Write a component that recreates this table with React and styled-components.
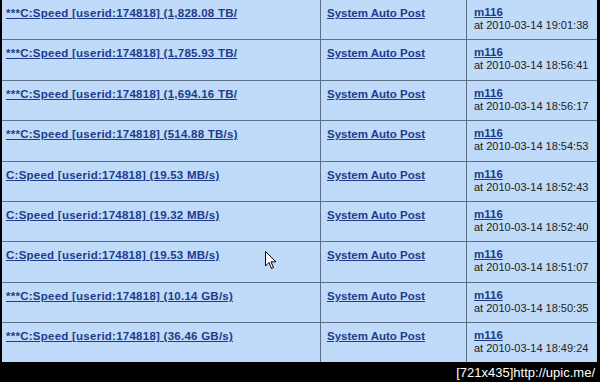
import React from 'react'
import styled, { createGlobalStyle } from 'styled-components'

const Global = createGlobalStyle`
  html, body {
    margin: 0;
    padding: 0;
    background: #000;
  }
  body {
    width: 600px;
    height: 382px;
    overflow: hidden;
  }
`

const Screen = styled.div`
  position: relative;
  width: 600px;
  height: 382px;
  background: #000;
  display: flex;
  flex-direction: column;
`

const Table = styled.div`
  margin-left: 2px;
  width: 595px;
  height: 362px;
  flex: none;
  overflow: hidden;
  background: #c0dbf9;
  display: flex;
  flex-direction: column;
`

const Row = styled.div`
  flex: none;
  height: 40.4px;
  box-sizing: border-box;
  display: grid;
  grid-template-columns: 319px 146px 1fr;
  border-bottom: 1px solid #5d6f87;
`

const Cell = styled.div`
  padding: ${p => p.pad || '6px 4px'};
  border-right: ${p => (p.edge ? '1px solid #5d6f87' : 'none')};
  font-family: "Liberation Sans", Arial, sans-serif;
  font-size: 11px;
  line-height: 13px;
  color: #1c1c1c;
`

const Link = styled.a`
  font-family: "Liberation Sans", Arial, sans-serif;
  font-weight: bold;
  font-size: 11.5px;
  letter-spacing: ${p => p.spread || '0'};
  color: #213b8b;
  text-decoration: underline;
  white-space: nowrap;
  cursor: pointer;
`

const When = styled.div`
  color: #222;
  font-size: 11px;
  margin-top: 0;
`

const Footer = styled.div`
  flex: 1;
  display: flex;
  justify-content: flex-end;
  align-items: center;
  padding-right: 5px;
  font-family: "Liberation Sans", Arial, sans-serif;
  font-size: 13px;
  color: #fff;
`

const Pointer = styled.svg`
  position: absolute;
  left: 265px;
  top: 251px;
`

const rows = [
  ['***C:Speed [userid:174818] (1,828.08 TB/', '19:01:38'],
  ['***C:Speed [userid:174818] (1,785.93 TB/', '18:56:41'],
  ['***C:Speed [userid:174818] (1,694.16 TB/', '18:56:17'],
  ['***C:Speed [userid:174818] (514.88 TB/s)', '18:54:53'],
  ['C:Speed [userid:174818] (19.53 MB/s)', '18:52:43'],
  ['C:Speed [userid:174818] (19.32 MB/s)', '18:52:40'],
  ['C:Speed [userid:174818] (19.53 MB/s)', '18:51:07'],
  ['***C:Speed [userid:174818] (10.14 GB/s)', '18:50:35'],
  ['***C:Speed [userid:174818] (36.46 GB/s)', '18:49:24'],
]

export default function App() {
  return (
    <Screen>
      <Global />
      <Table>
        {rows.map(([title, time], i) => (
          <Row key={i}>
            <Cell edge pad="7px 4px">
              <Link spread="0.25px">{title}</Link>
            </Cell>
            <Cell edge pad="7px 6px">
              <Link>System Auto Post</Link>
            </Cell>
            <Cell pad="6px 7px">
              <Link>m116</Link>
              <When>at 2010-03-14 {time}</When>
            </Cell>
          </Row>
        ))}
      </Table>
      <Footer>[721x435]http://upic.me/</Footer>
      <Pointer width="12" height="19" viewBox="0 0 12 19">
        <path d="M0.5 0.5 L0.5 15 L4 11.5 L6.5 17.5 L8.5 16.6 L6 10.8 L11 10.8 Z" fill="#fff" stroke="#000" strokeWidth="1" strokeLinejoin="round" />
      </Pointer>
    </Screen>
  )
}
